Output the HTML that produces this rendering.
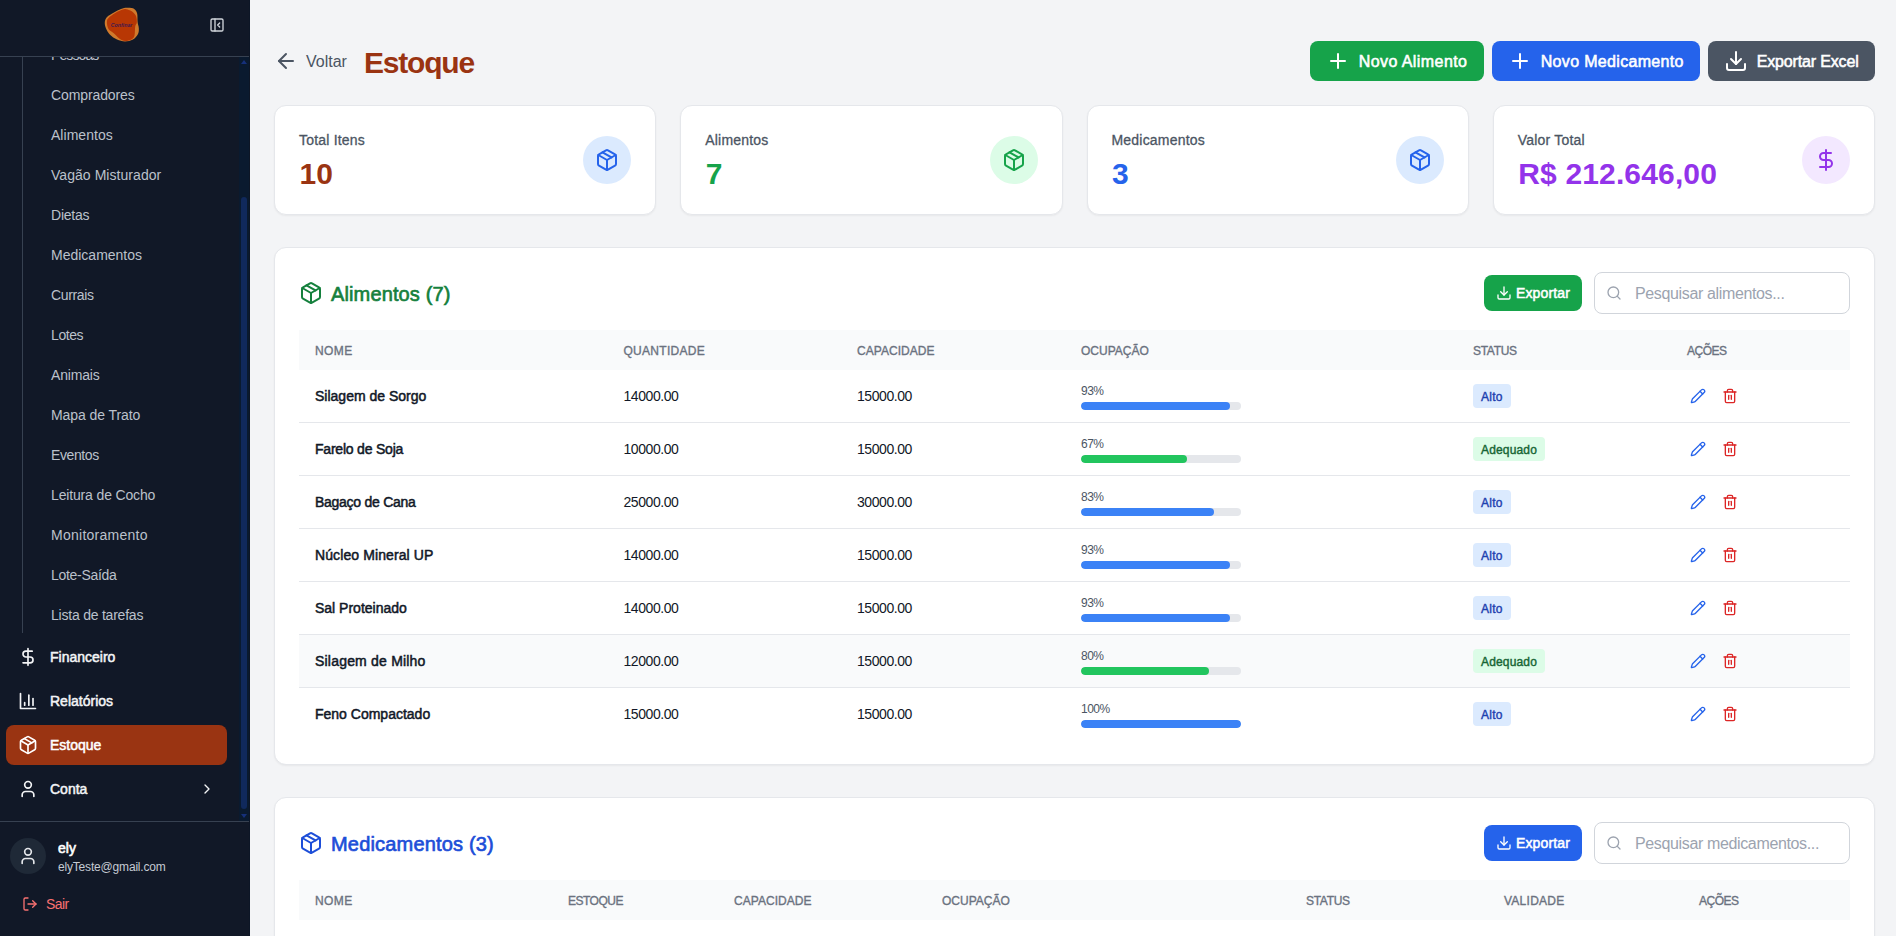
<!DOCTYPE html>
<html lang="pt-BR">
<head>
<meta charset="utf-8">
<title>Estoque</title>
<style>
*{box-sizing:border-box;margin:0;padding:0}
html,body{width:1896px;height:936px;overflow:hidden}
body{font-family:"Liberation Sans",sans-serif;background:#f3f4f6;color:#111827;position:relative}
svg{display:block}
.ic{fill:none;stroke:currentColor;stroke-width:2;stroke-linecap:round;stroke-linejoin:round}
/* ---------- sidebar ---------- */
#sb{position:absolute;left:0;top:0;width:250px;height:936px;background:#111827;border-right:1px solid #0d1626;overflow:hidden}
#sbh{position:absolute;left:0;top:0;width:249px;height:57px;border-bottom:1px solid #374151}
#logo{position:absolute;left:100px;top:4px}
#tog{position:absolute;left:209px;top:17px;color:#d1d5db}
#scroll{position:absolute;left:0;top:57px;width:249px;height:764px;overflow:hidden}
#vline{position:absolute;left:22px;top:0;width:1px;height:576px;background:#374151}
.sub{position:absolute;left:51px;font-size:14px;line-height:20px;color:#bbc1cb;white-space:nowrap}
.sbd{-webkit-text-stroke:.5px currentColor}
.mi{position:absolute;left:6px;width:221px;height:40px;border-radius:8px;color:#f3f4f6;font-size:14px;line-height:20px;-webkit-text-stroke:.5px currentColor}
.mi svg{position:absolute;left:12px;top:10px}
.mi span{position:absolute;left:44px;top:10px;white-space:nowrap}
.mi.act{background:#9a3412;color:#fff}
#track{position:absolute;left:239px;top:0;width:10px;height:764px;background:#0a1a2f}
#thumb{position:absolute;left:2px;top:140px;width:6px;height:612px;border-radius:3px;background:#10295c}
.arr{position:absolute;left:2px;width:0;height:0;border-left:3px solid transparent;border-right:3px solid transparent}
#sbf{position:absolute;left:0;top:821px;width:249px;height:115px;border-top:1px solid #374151}
#av{position:absolute;left:10px;top:16px;width:36px;height:36px;border-radius:50%;background:#1f2937;color:#e5e7eb}
#av svg{position:absolute;left:8px;top:8px}
#un{position:absolute;left:58px;top:16px;font-size:14px;line-height:20px;color:#fff;-webkit-text-stroke:.6px currentColor}
#ue{position:absolute;left:58px;top:37px;font-size:12px;line-height:16px;color:#c5cad3;white-space:nowrap;letter-spacing:-.18px}
#sair{position:absolute;left:22px;top:72px;color:#f87171;font-size:14px;line-height:20px}
#sair svg{position:absolute;left:0;top:2px}
#sair span{position:absolute;left:24px;top:0;letter-spacing:-.6px}
/* ---------- main ---------- */
#back{position:absolute;left:274px;top:49px;color:#4b5563}
#voltar{position:absolute;left:306px;top:50px;font-size:16px;line-height:24px;color:#4b5563}
#title{position:absolute;left:364px;top:45px;font-size:30px;line-height:36px;font-weight:700;color:#9a3412;white-space:nowrap;letter-spacing:-1.2px}
.btn{position:absolute;top:41px;height:40px;border-radius:8px;color:#fff;font-size:16px;line-height:24px;white-space:nowrap;-webkit-text-stroke:.55px currentColor}
.btn svg{position:absolute;left:16px;top:8px}
.btn span{position:absolute;left:48.700px;top:9px}
.card{position:absolute;top:105px;width:382.250px;height:110px;background:#fff;border:1px solid #e5e7eb;border-radius:12px;box-shadow:0 1px 2px rgba(0,0,0,.05)}
.card .lb{position:absolute;left:24px;top:24px;font-size:14px;line-height:20px;color:#4b5563;white-space:nowrap;letter-spacing:.2px;-webkit-text-stroke:.3px currentColor}
.card .vl{position:absolute;left:24.500px;top:49.500px;font-size:30px;line-height:36px;font-weight:700;white-space:nowrap}
.card .ci{position:absolute;left:308px;top:30px;width:48px;height:48px;border-radius:50%}
.card .ci svg{position:absolute;left:12px;top:12px}
.panel{position:absolute;left:274px;width:1601px;background:#fff;border:1px solid #e5e7eb;border-radius:12px;box-shadow:0 1px 2px rgba(0,0,0,.05)}
.ph{position:absolute;left:24px;top:24px;width:1551px;height:42px}
.ph .pi{position:absolute;left:0;top:9px}
.ph .pt{position:absolute;left:32px;top:8px;font-size:20px;line-height:28px;white-space:nowrap;-webkit-text-stroke:.65px currentColor}
.ph .ex{position:absolute;left:1185px;top:3px;width:98px;height:36px;border-radius:8px;color:#fff;font-size:14px;line-height:20px;-webkit-text-stroke:.5px currentColor;letter-spacing:.13px}
.ph .ex svg{position:absolute;left:12px;top:10px}
.ph .ex span{position:absolute;left:32px;top:8px}
.ph .se{position:absolute;left:1295px;top:0;width:256px;height:42px;border:1px solid #d1d5db;border-radius:8px;background:#fff;color:#9ca3af;font-size:16px;line-height:24px}
.ph .se svg{position:absolute;left:11px;top:12px}
.ph .se span{position:absolute;left:40px;top:9px;white-space:nowrap;letter-spacing:-.36px}
table{position:absolute;left:24px;top:82px;width:1551px;border-collapse:separate;border-spacing:0;table-layout:fixed}
th{height:40px;background:#f9fafb;text-align:left;padding:1.500px 16px 0;font-size:12px;line-height:16px;font-weight:400;-webkit-text-stroke:.35px currentColor;color:#6b7280;letter-spacing:.1px;text-transform:uppercase;white-space:nowrap}
td{height:53px;padding:0 16px;font-size:14px;line-height:20px;color:#111827;white-space:nowrap;border-bottom:1px solid #e5e7eb;vertical-align:middle}
tr:last-child td{border-bottom:none;height:52px}
tr.alt td{background:#f9fafb}
td.nm{-webkit-text-stroke:.5px currentColor}
td.n{letter-spacing:-.43px}
.pc{font-size:12px;line-height:16px;color:#4b5563;letter-spacing:-.5px;position:relative;top:1px}
.bar{margin-top:4px;width:160px;height:8px;border-radius:4px;background:#e5e7eb;overflow:hidden}
.bar i{display:block;height:8px;border-radius:4px}
.bl{background:#3b82f6}.gr{background:#22c55e}
.bd{display:inline-block;vertical-align:middle;height:24px;padding:5px 8px 3px;border-radius:4px;font-size:12px;line-height:16px;-webkit-text-stroke:.4px currentColor;letter-spacing:.25px}
.bd.a{background:#dbeafe;color:#1e40af}
.bd.g{background:#dcfce7;color:#166534}
.ac{position:relative;height:16px}
.ac svg{position:absolute;top:0}
.ac .pe{left:3px;color:#2563eb}
.ac .tr{left:35px;color:#dc2626}
</style>
</head>
<body>
<svg width="0" height="0" style="position:absolute">
<defs>
<g id="i-pkg"><path d="m7.5 4.27 9 5.15"/><path d="M21 8a2 2 0 0 0-1-1.73l-7-4a2 2 0 0 0-2 0l-7 4A2 2 0 0 0 3 8v8a2 2 0 0 0 1 1.73l7 4a2 2 0 0 0 2 0l7-4A2 2 0 0 0 21 16Z"/><path d="m3.3 7 8.7 5 8.7-5"/><path d="M12 22V12"/></g>
<g id="i-usd"><path d="M12 2v20"/><path d="M17 5H9.500a3.500 3.500 0 0 0 0 7h5a3.500 3.500 0 0 1 0 7H6"/></g>
<g id="i-user"><path d="M19 21v-2a4 4 0 0 0-4-4H9a4 4 0 0 0-4 4v2"/><circle cx="12" cy="7" r="4"/></g>
<g id="i-dl"><path d="M21 15v4a2 2 0 0 1-2 2H5a2 2 0 0 1-2-2v-4"/><path d="m7 10 5 5 5-5"/><path d="M12 15V3"/></g>
<g id="i-plus"><path d="M5 12h14"/><path d="M12 5v14"/></g>
<g id="i-search"><circle cx="11" cy="11" r="8"/><path d="m21 21-4.300-4.300"/></g>
<g id="i-pen"><path d="M21.174 6.812a1 1 0 0 0-3.986-3.987L3.842 16.174a2 2 0 0 0-.5.830l-1.321 4.352a.5.500 0 0 0 .623.622l4.353-1.320a2 2 0 0 0 .830-.497z"/><path d="m15 5 4 4"/></g>
<g id="i-trash"><path d="M3 6h18"/><path d="M19 6v14c0 1-1 2-2 2H7c-1 0-2-1-2-2V6"/><path d="M8 6V4c0-1 1-2 2-2h4c1 0 2 1 2 2v2"/><path d="M10 11v6"/><path d="M14 11v6"/></g>
</defs>
</svg>

<!-- SIDEBAR -->
<div id="sb">
  <div id="sbh">
    <svg id="logo" width="44" height="42" viewBox="100 4 44 42">
      <path d="M127.0 7.8C129.0 7.7 131.3 7.4 133.0 8.3C134.7 9.2 136.2 10.7 137.0 13.0C137.8 15.3 137.3 19.5 137.6 22.0C137.9 24.5 138.7 26.0 138.8 28.0C138.9 30.0 139.0 32.1 138.0 34.0C137.0 35.9 135.2 38.3 133.0 39.5C130.8 40.7 127.7 41.4 125.0 41.4C122.3 41.4 119.5 40.7 117.0 39.6C114.5 38.5 111.8 36.6 110.0 34.8C108.2 32.9 106.9 30.6 106.0 28.5C105.1 26.400 104.6 23.9 104.8 22.0C105.0 20.1 105.500 18.6 107.0 17.0C108.500 15.4 111.7 13.8 114.0 12.500C116.300 11.2 118.8 9.8 121.0 9.0C123.2 8.2 125.0 7.9 127.0 7.8Z" fill="#d07a2c"/>
      <path d="M127.6 9.6C129.1 10.1 131.6 11.0 133.0 12.2C134.4 13.3 135.6 14.7 136.2 16.5C136.8 18.3 137.0 21.2 136.8 22.8C136.6 24.4 135.6 24.3 135.2 26.4C134.8 28.5 135.1 33.2 134.5 35.4C133.9 37.6 133.0 38.5 131.4 39.4C129.8 40.3 127.1 41.1 125.1 41.0C123.1 40.9 121.2 39.8 119.3 38.5C117.4 37.2 115.3 34.7 113.5 33.1C111.7 31.5 109.6 31.0 108.5 29.1C107.4 27.2 106.8 23.8 106.9 21.9C107.0 20.0 107.2 19.2 109.0 17.5C110.8 15.8 115.4 13.0 117.9 11.6C120.4 10.2 122.4 9.5 124.0 9.2C125.6 8.9 126.1 9.1 127.6 9.6Z" fill="#b83704"/>
      <text x="121.600" y="26.800" font-size="5.300" font-style="italic" font-weight="700" text-anchor="middle" fill="#43194f" font-family="Liberation Sans, sans-serif" textLength="21.500" lengthAdjust="spacingAndGlyphs">Confinar</text>
    </svg>
    <svg id="tog" class="ic" width="16" height="16" viewBox="0 0 24 24"><rect x="3" y="3" width="18" height="18" rx="2"/><path d="M9 3v18"/><path d="m16 15-3-3 3-3"/></svg>
  </div>
  <div id="scroll">
    <div id="vline"></div>
    <div class="sub" style="top:-12px;letter-spacing:-.9px">Pessoas</div>
    <div class="sub" style="top:28px;letter-spacing:-0.11px">Compradores</div>
    <div class="sub" style="top:68px;letter-spacing:0.03px">Alimentos</div>
    <div class="sub" style="top:108px;letter-spacing:0.05px">Vagão Misturador</div>
    <div class="sub" style="top:148px;letter-spacing:-0.23px">Dietas</div>
    <div class="sub" style="top:188px;letter-spacing:0px">Medicamentos</div>
    <div class="sub" style="top:228px;letter-spacing:-0.35px">Currais</div>
    <div class="sub" style="top:268px;letter-spacing:-0.41px">Lotes</div>
    <div class="sub" style="top:308px;letter-spacing:-0.19px">Animais</div>
    <div class="sub" style="top:348px;letter-spacing:-0.08px">Mapa de Trato</div>
    <div class="sub" style="top:388px;letter-spacing:-0.41px">Eventos</div>
    <div class="sub" style="top:428px;letter-spacing:-0.15px">Leitura de Cocho</div>
    <div class="sub" style="top:468px;letter-spacing:0.26px">Monitoramento</div>
    <div class="sub" style="top:508px;letter-spacing:-0.3px">Lote-Saída</div>
    <div class="sub" style="top:548px;letter-spacing:-0.22px">Lista de tarefas</div>
    <div class="mi" style="top:580px"><svg class="ic" width="20" height="20" viewBox="0 0 24 24"><use href="#i-usd"/></svg><span>Financeiro</span></div>
    <div class="mi" style="top:624px"><svg class="ic" width="20" height="20" viewBox="0 0 24 24"><path d="M3 3v18h18"/><path d="M18 17V9"/><path d="M13 17V5"/><path d="M8 17v-3"/></svg><span>Relatórios</span></div>
    <div class="mi act" style="top:668px"><svg class="ic" width="20" height="20" viewBox="0 0 24 24"><use href="#i-pkg"/></svg><span>Estoque</span></div>
    <div class="mi" style="top:712px"><svg class="ic" width="20" height="20" viewBox="0 0 24 24"><use href="#i-user"/></svg><span>Conta</span>
      <svg class="ic" width="16" height="16" viewBox="0 0 24 24" style="left:193px;top:12px"><path d="m9 18 6-6-6-6"/></svg></div>
    <div id="track">
      <div class="arr" style="top:3px;border-bottom:4px solid #16307a"></div>
      <div id="thumb"></div>
      <div class="arr" style="top:757px;border-top:4px solid #16307a"></div>
    </div>
  </div>
  <div id="sbf">
    <div id="av"><svg class="ic" width="20" height="20" viewBox="0 0 24 24"><use href="#i-user"/></svg></div>
    <div id="un">ely</div>
    <div id="ue">elyTeste@gmail.com</div>
    <div id="sair"><svg class="ic" width="16" height="16" viewBox="0 0 24 24"><path d="M9 21H5a2 2 0 0 1-2-2V5a2 2 0 0 1 2-2h4"/><path d="m16 17 5-5-5-5"/><path d="M21 12H9"/></svg><span>Sair</span></div>
  </div>
</div>

<!-- MAIN HEADER -->
<svg id="back" class="ic" width="24" height="24" viewBox="0 0 24 24"><path d="m12 19-7-7 7-7"/><path d="M19 12H5"/></svg>
<div id="voltar">Voltar</div>
<div id="title">Estoque</div>
<div class="btn" style="left:1310px;width:174px;background:#16a34a"><svg class="ic" width="24" height="24" viewBox="0 0 24 24"><use href="#i-plus"/></svg><span style="letter-spacing:.43px">Novo Alimento</span></div>
<div class="btn" style="left:1492px;width:208px;background:#2563eb"><svg class="ic" width="24" height="24" viewBox="0 0 24 24"><use href="#i-plus"/></svg><span style="letter-spacing:.33px">Novo Medicamento</span></div>
<div class="btn" style="left:1708px;width:167px;background:#4b5563"><svg class="ic" width="24" height="24" viewBox="0 0 24 24"><use href="#i-dl"/></svg><span style="letter-spacing:-.15px">Exportar Excel</span></div>

<!-- CARDS -->
<div class="card" style="left:274px"><div class="lb">Total Itens</div><div class="vl" style="color:#9a3412">10</div><div class="ci" style="background:#dbeafe;color:#2563eb"><svg class="ic" width="24" height="24" viewBox="0 0 24 24"><use href="#i-pkg"/></svg></div></div>
<div class="card" style="left:680.250px"><div class="lb">Alimentos</div><div class="vl" style="color:#16a34a">7</div><div class="ci" style="left:309px;background:#dcfce7;color:#16a34a"><svg class="ic" width="24" height="24" viewBox="0 0 24 24"><use href="#i-pkg"/></svg></div></div>
<div class="card" style="left:1086.500px"><div class="lb">Medicamentos</div><div class="vl" style="color:#2563eb">3</div><div class="ci" style="background:#dbeafe;color:#2563eb"><svg class="ic" width="24" height="24" viewBox="0 0 24 24"><use href="#i-pkg"/></svg></div></div>
<div class="card" style="left:1492.750px"><div class="lb">Valor Total</div><div class="vl" style="color:#9333ea;letter-spacing:.15px">R$ 212.646,00</div><div class="ci" style="background:#f3e8ff;color:#9333ea"><svg class="ic" width="24" height="24" viewBox="0 0 24 24"><use href="#i-usd"/></svg></div></div>

<!-- ALIMENTOS -->
<div class="panel" style="top:247px;height:518px">
  <div class="ph">
    <svg class="ic pi" width="24" height="24" viewBox="0 0 24 24" style="color:#15803d"><use href="#i-pkg"/></svg>
    <div class="pt" style="color:#15803d;letter-spacing:.13px">Alimentos (7)</div>
    <div class="ex" style="background:#16a34a"><svg class="ic" width="16" height="16" viewBox="0 0 24 24"><use href="#i-dl"/></svg><span>Exportar</span></div>
    <div class="se"><svg class="ic" width="16" height="16" viewBox="0 0 24 24"><use href="#i-search"/></svg><span>Pesquisar alimentos...</span></div>
  </div>
  <table>
    <colgroup><col style="width:308.500px"><col style="width:233.500px"><col style="width:224px"><col style="width:392px"><col style="width:214px"><col style="width:179px"></colgroup>
    <tr><th style="letter-spacing:0.4px">Nome</th><th style="letter-spacing:0.28px">Quantidade</th><th style="letter-spacing:0.04px">Capacidade</th><th style="letter-spacing:0px">Ocupação</th><th style="letter-spacing:-0.29px">Status</th><th style="letter-spacing:-0.5px">Ações</th></tr>
    <tr><td class="nm" style="letter-spacing:0px">Silagem de Sorgo</td><td class="n">14000.00</td><td class="n">15000.00</td><td><div class="pc">93%</div><div class="bar"><i class="bl" style="width:93.300%"></i></div></td><td><span class="bd a">Alto</span></td><td><div class="ac"><svg class="ic pe" width="16" height="16" viewBox="0 0 24 24"><use href="#i-pen"/></svg><svg class="ic tr" width="16" height="16" viewBox="0 0 24 24"><use href="#i-trash"/></svg></div></td></tr>
    <tr><td class="nm" style="letter-spacing:-0.21px">Farelo de Soja</td><td class="n">10000.00</td><td class="n">15000.00</td><td><div class="pc">67%</div><div class="bar"><i class="gr" style="width:66.300%"></i></div></td><td><span class="bd g" style="letter-spacing:.16px">Adequado</span></td><td><div class="ac"><svg class="ic pe" width="16" height="16" viewBox="0 0 24 24"><use href="#i-pen"/></svg><svg class="ic tr" width="16" height="16" viewBox="0 0 24 24"><use href="#i-trash"/></svg></div></td></tr>
    <tr><td class="nm" style="letter-spacing:-0.27px">Bagaço de Cana</td><td class="n">25000.00</td><td class="n">30000.00</td><td><div class="pc">83%</div><div class="bar"><i class="bl" style="width:83.300%"></i></div></td><td><span class="bd a">Alto</span></td><td><div class="ac"><svg class="ic pe" width="16" height="16" viewBox="0 0 24 24"><use href="#i-pen"/></svg><svg class="ic tr" width="16" height="16" viewBox="0 0 24 24"><use href="#i-trash"/></svg></div></td></tr>
    <tr><td class="nm" style="letter-spacing:0.1px">Núcleo Mineral UP</td><td class="n">14000.00</td><td class="n">15000.00</td><td><div class="pc">93%</div><div class="bar"><i class="bl" style="width:93.300%"></i></div></td><td><span class="bd a">Alto</span></td><td><div class="ac"><svg class="ic pe" width="16" height="16" viewBox="0 0 24 24"><use href="#i-pen"/></svg><svg class="ic tr" width="16" height="16" viewBox="0 0 24 24"><use href="#i-trash"/></svg></div></td></tr>
    <tr><td class="nm" style="letter-spacing:0px">Sal Proteinado</td><td class="n">14000.00</td><td class="n">15000.00</td><td><div class="pc">93%</div><div class="bar"><i class="bl" style="width:93.300%"></i></div></td><td><span class="bd a">Alto</span></td><td><div class="ac"><svg class="ic pe" width="16" height="16" viewBox="0 0 24 24"><use href="#i-pen"/></svg><svg class="ic tr" width="16" height="16" viewBox="0 0 24 24"><use href="#i-trash"/></svg></div></td></tr>
    <tr class="alt"><td class="nm" style="letter-spacing:0.2px">Silagem de Milho</td><td class="n">12000.00</td><td class="n">15000.00</td><td><div class="pc">80%</div><div class="bar"><i class="gr" style="width:80%"></i></div></td><td><span class="bd g" style="letter-spacing:.16px">Adequado</span></td><td><div class="ac"><svg class="ic pe" width="16" height="16" viewBox="0 0 24 24"><use href="#i-pen"/></svg><svg class="ic tr" width="16" height="16" viewBox="0 0 24 24"><use href="#i-trash"/></svg></div></td></tr>
    <tr><td class="nm" style="letter-spacing:0px">Feno Compactado</td><td class="n">15000.00</td><td class="n">15000.00</td><td><div class="pc">100%</div><div class="bar"><i class="bl" style="width:100%"></i></div></td><td><span class="bd a">Alto</span></td><td><div class="ac"><svg class="ic pe" width="16" height="16" viewBox="0 0 24 24"><use href="#i-pen"/></svg><svg class="ic tr" width="16" height="16" viewBox="0 0 24 24"><use href="#i-trash"/></svg></div></td></tr>
  </table>
</div>

<!-- MEDICAMENTOS -->
<div class="panel" style="top:797px;height:300px">
  <div class="ph">
    <svg class="ic pi" width="24" height="24" viewBox="0 0 24 24" style="color:#1d4ed8"><use href="#i-pkg"/></svg>
    <div class="pt" style="color:#1d4ed8;letter-spacing:.18px">Medicamentos (3)</div>
    <div class="ex" style="background:#2563eb"><svg class="ic" width="16" height="16" viewBox="0 0 24 24"><use href="#i-dl"/></svg><span>Exportar</span></div>
    <div class="se"><svg class="ic" width="16" height="16" viewBox="0 0 24 24"><use href="#i-search"/></svg><span>Pesquisar medicamentos...</span></div>
  </div>
  <table>
    <colgroup><col style="width:253px"><col style="width:166px"><col style="width:208px"><col style="width:364px"><col style="width:198px"><col style="width:195px"><col style="width:167px"></colgroup>
    <tr><th style="letter-spacing:0.4px">Nome</th><th style="letter-spacing:-0.5px">Estoque</th><th style="letter-spacing:0.04px">Capacidade</th><th style="letter-spacing:0px">Ocupação</th><th style="letter-spacing:-0.29px">Status</th><th style="letter-spacing:0.25px">Validade</th><th style="letter-spacing:-0.5px">Ações</th></tr>
    <tr><td class="nm">Ivermectina</td><td>120</td><td>200</td><td></td><td></td><td></td><td></td></tr>
  </table>
</div>
</body>
</html>
